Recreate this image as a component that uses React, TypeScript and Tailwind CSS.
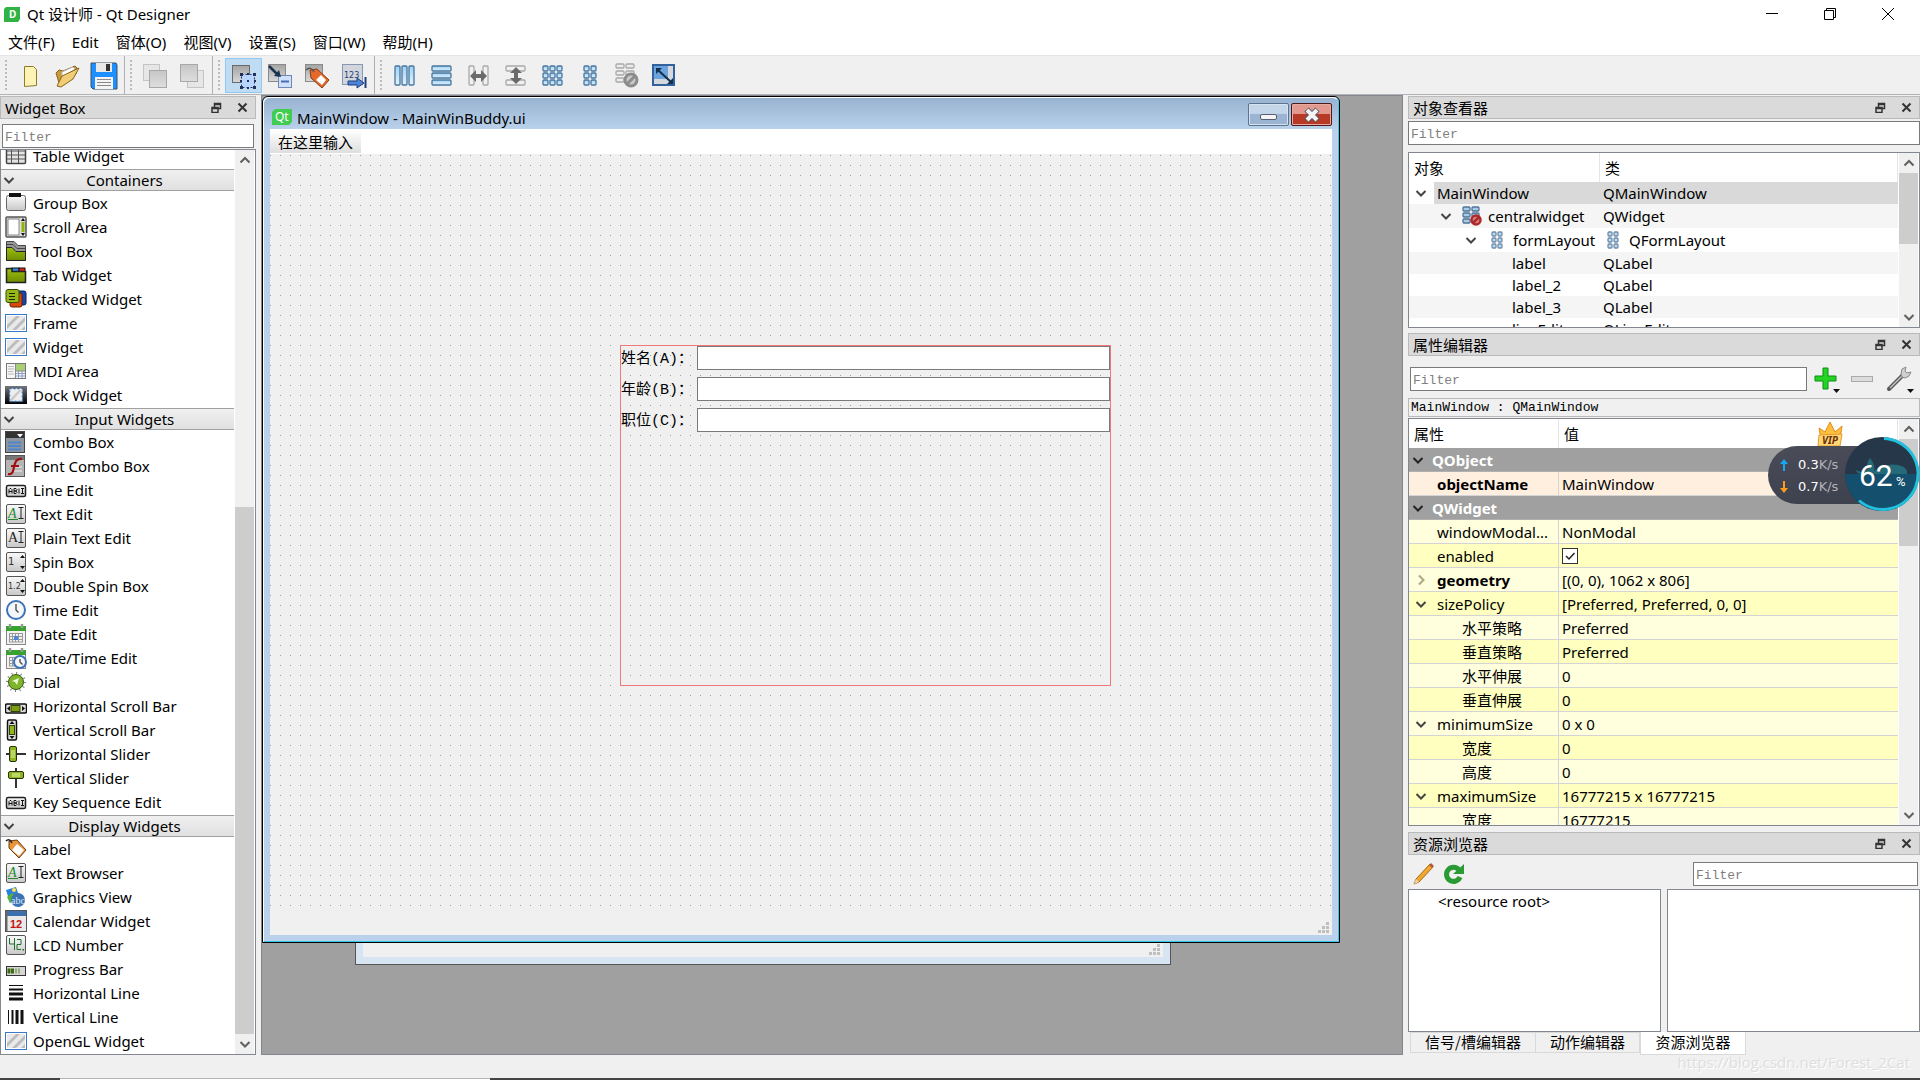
import { Fragment, type ReactNode } from "react";

type IconProps = { children: ReactNode };

function Glyph({ children }: IconProps) {
  return (
    <svg viewBox="0 0 22 22" className="size-[22px] shrink-0" aria-hidden="true">
      {children}
    </svg>
  );
}

function ToolGlyph({ children }: IconProps) {
  return (
    <svg viewBox="0 0 28 28" className="size-7 shrink-0" aria-hidden="true">
      {children}
    </svg>
  );
}

/* ---------- widget box icons ---------- */

const plate = <rect x="1.5" y="1.5" width="19" height="19" rx="1.5" fill="url(#plate)" stroke="#555" />;

const hatch = (
  <>
    <rect x="0.5" y="2.5" width="21" height="17" fill="#fff" stroke="#3a78c8" />
    <rect x="2" y="4" width="18" height="14" fill="#e9e9e9" />
    <path d="M2 13 11 4h4L2 17zM7 18 20 5v4l-9 9zM16 18l4-4v4z" fill="#bcbcbc" />
  </>
);

const abi = (
  <>
    <rect x="1.5" y="6.5" width="19" height="11" rx="1.5" fill="url(#plate)" stroke="#222" strokeWidth="1.500" />
    <path
      d="M4 14.500v-4l1-1h1l1 1v4M4 12.500h3M9 14.500v-5h2l1 1-1 1.500H9h2l1 1.500-1 1H9M14 9.500v5M16 9.500h3M17.500 9.500v5M16 14.500h3"
      fill="none"
      stroke="#111"
    />
  </>
);

const textGlyph = (color: string, slanted: boolean) => (
  <>
    {plate}
    <text
      x="3"
      y="15"
      fontSize="14"
      fontFamily="Liberation Serif"
      fontStyle={slanted ? "italic" : "normal"}
      fill={color}
    >
      A
    </text>
    {slanted && <path d="M3 16.500h10" stroke={color} />}
    <path d="M13.500 4.500h5M16 4.500v11M13.500 15.500h5" stroke="#222" fill="none" />
  </>
);

const spin = (value: string, size: number) => (
  <>
    {plate}
    <text x="3" y="14" fontSize={size} fontFamily="DejaVu Sans" fill="#333">
      {value}
    </text>
    <path d="m15 7 2.500-3L20 7zM15 15l2.500 3 2.500-3z" fill="#111" />
  </>
);

const clock = (cx: number, cy: number, r: number) => (
  <>
    <circle cx={cx} cy={cy} r={r} fill="#f4f6fa" stroke="#3d74b8" strokeWidth="2" />
    <path d={`M${cx} ${cy - r + 3}V${cy}l2.500 2.500`} fill="none" stroke="#444" strokeWidth="1.300" />
  </>
);

const calendar = (
  <>
    <rect x="1.500" y="4.500" width="19" height="17" fill="#f2f2f2" stroke="#888" />
    <rect x="1" y="3" width="20" height="5" fill="#39a22f" />
    <path d="M5 1v4M17 1v4" stroke="#999" strokeWidth="2.500" />
    <path d="M4 10.500h14M4 13.500h14M4 16.500h14M4 19h14M4.500 10v9M7.500 10v9M10.500 10v9M13.500 10v9M17.500 10v9" stroke="#999" />
  </>
);

const sliderKnob = (
  <>
    <path d="M1 11h20" stroke="#333" strokeWidth="2" />
    <rect x="4.500" y="3.500" width="7" height="15" rx="1.500" fill="#8fb61c" stroke="#26320a" />
    <path d="M7 7v8M9 7v8" stroke="#e8f4b8" />
  </>
);

const ICONS: Record<string, ReactNode> = {
  "Table Widget": (
    <>
      <rect x="1.500" y="1.500" width="19" height="17" rx="1" fill="#e4e4e4" stroke="#444" strokeWidth="1.500" />
      <path d="M2 6h18M2 10h18M2 14h18M6.500 2v16M13.500 2v16" stroke="#555" />
    </>
  ),
  "Group Box": (
    <>
      <rect x="1.500" y="3.500" width="19" height="15" rx="2" fill="url(#plate)" stroke="#666" />
      <rect x="4" y="1" width="12" height="4" fill="#111" />
    </>
  ),
  "Scroll Area": (
    <>
      <rect x="1" y="1" width="20" height="20" rx="1" fill="#ddd" stroke="#555" strokeWidth="1.500" />
      <rect x="3" y="3" width="11" height="16" fill="#fff" stroke="#888" />
      <rect x="16.500" y="6" width="3" height="10" fill="#8db600" />
      <path d="m16 5 2-3 2 3zM16 17l2 3 2-3z" fill="#111" />
    </>
  ),
  "Tool Box": (
    <>
      <path d="M1.500 8V1.500H9l4 4h7.500V20.500h-19z" fill="#999" stroke="#444" />
      <path d="M1.500 4.500H8l4 4h8.500" fill="none" stroke="#444" />
      <path d="M1.500 7.500H7l4 4h9.500v9h-19z" fill="url(#olive)" stroke="#222" />
    </>
  ),
  "Tab Widget": (
    <>
      <rect x="7" y="4" width="7" height="4" fill="#2f8fe0" stroke="#111" />
      <rect x="14" y="4" width="6" height="4" fill="#d22" stroke="#111" />
      <path d="M1.500 4.500H7v3h13.500v11h-19z" fill="url(#olive)" stroke="#222" strokeWidth="1.500" />
    </>
  ),
  "Stacked Widget": (
    <>
      <rect x="10" y="3" width="11" height="14" rx="2" fill="#1747a8" stroke="#0b245c" />
      <rect x="5" y="5" width="12" height="14" rx="2" fill="#d9480f" stroke="#6b1f00" />
      <rect x="1" y="1.500" width="13" height="13" rx="2" fill="#96b91a" stroke="#3b4d00" />
      <path d="M4 5.500h6M4 8.500h6M4 11.500h6" stroke="#1c2500" />
    </>
  ),
  Frame: hatch,
  Widget: hatch,
  "MDI Area": (
    <>
      <rect x="1.500" y="3.500" width="19" height="15" fill="#f4f4f4" stroke="#777" />
      <rect x="11" y="4" width="9" height="7" fill="#a9cf76" />
      <path d="M3 6.500h6M3 9h6M3 11.500h5M3 14h6" stroke="#bbb" />
      <path d="M11 13.500h9M11 16h9M13.500 11v7M17 11v7" stroke="#8aa0c8" />
      <path d="M10.500 4v14M11 11h9" stroke="#888" />
    </>
  ),
  "Dock Widget": (
    <>
      <rect y="2" width="22" height="18" fill="url(#dark)" />
      <rect x="4.500" y="4.500" width="13" height="13" fill="#eee" stroke="#2b6bb8" strokeDasharray="2 2" strokeWidth="1.500" />
      <path d="m6 14 8-8h3l-9 10H6z" fill="#ccc" />
    </>
  ),
  "Combo Box": (
    <>
      <rect x="0.500" y="0.500" width="19" height="21" fill="#8f959c" stroke="#444" />
      <rect x="1" y="1" width="18" height="6" fill="#333" />
      <path d="M12 3h6l-3 3.500z" fill="#fff" />
      <path d="M3 11.500h13M3 15h13M3 18.500h13" stroke="#4f86cc" strokeWidth="2" />
    </>
  ),
  "Font Combo Box": (
    <>
      <rect x="0.500" y="0.500" width="19" height="21" fill="#b4b4b4" stroke="#555" />
      <path d="M1 3h18" stroke="#777" strokeWidth="4" />
      <path d="M8 12h9M7 16h10" stroke="#d0d0d0" strokeWidth="2" />
      <path d="M3 19c5 1 5-3 6-7s2-9 8-8M6 11h8" fill="none" stroke="#a01010" strokeWidth="2.200" />
    </>
  ),
  "Line Edit": abi,
  "Text Edit": textGlyph("#1d8a2a", true),
  "Plain Text Edit": textGlyph("#222", false),
  "Spin Box": spin("1", 10),
  "Double Spin Box": spin("1.2", 8),
  "Time Edit": clock(11, 11, 9),
  "Date Edit": (
    <>
      {calendar}
      <rect x="9" y="13" width="4" height="4" fill="#4a86d8" />
    </>
  ),
  "Date/Time Edit": (
    <>
      {calendar}
      {clock(15, 15, 6)}
    </>
  ),
  Dial: (
    <>
      <circle cx="11" cy="11" r="9" fill="none" stroke="#777" strokeWidth="2" strokeDasharray="1 3.700" />
      <circle cx="11" cy="11" r="7.500" fill="#7fb52a" stroke="#3c5a10" />
      <path d="m7 10 7-3-2 7-2-3z" fill="#eef7d8" />
    </>
  ),
  "Horizontal Scroll Bar": (
    <>
      <rect x="0.500" y="9" width="21" height="9" rx="1.500" fill="#ddd" stroke="#111" strokeWidth="1.500" />
      <rect x="6" y="10.500" width="9" height="6" fill="#7c9c14" stroke="#334400" />
      <path d="m5 11-3 2.500L5 16zM17 11l3 2.500L17 16z" fill="#111" />
    </>
  ),
  "Vertical Scroll Bar": (
    <>
      <rect x="2.500" y="1" width="9" height="20" rx="1.500" fill="#ddd" stroke="#111" strokeWidth="1.500" />
      <rect x="4.500" y="6.500" width="5" height="9" fill="#8fb61c" stroke="#334400" />
      <path d="M4.500 5 7 2l2.500 3zM4.500 17 7 20l2.500-3z" fill="#111" />
    </>
  ),
  "Horizontal Slider": sliderKnob,
  "Vertical Slider": <g transform="matrix(0 1 1 0 0 0)">{sliderKnob}</g>,
  "Key Sequence Edit": abi,
  Label: (
    <>
      <path d="m4 3 8-1 9 10-7 8L4 10z" fill="#e8943c" stroke="#6b3c10" />
      <path d="m12 6 7 6-5 6-7-6z" fill="#fff" />
      <path d="M1 3c3-3 5 0 6 2" fill="none" stroke="#222" strokeWidth="1.500" />
    </>
  ),
  "Text Browser": textGlyph("#1d8a2a", true),
  "Graphics View": (
    <>
      <path d="m1 4 10-3 3 9-9 7z" fill="#2c7fe0" />
      <path d="m2 11 5-4 5 4-7 6z" fill="#58b430" />
      <circle cx="9" cy="4" r="2" fill="#ffe14a" />
      <circle cx="13" cy="14" r="7" fill="#3a72b4" />
      <text x="6" y="18" fontSize="10" fontFamily="Liberation Serif" fill="#d7e4f4">
        abc
      </text>
    </>
  ),
  "Calendar Widget": (
    <>
      <rect x="0.500" y="0.500" width="21" height="21" fill="#e9e9e9" stroke="#555" />
      <rect x="2" y="1" width="19" height="5" fill="#3c6fae" />
      <path d="M1.500 1v20" stroke="#666" strokeWidth="2" />
      <text x="5" y="18" fontSize="11" fontWeight="700" fontFamily="Liberation Sans" fill="#c41414">
        12
      </text>
    </>
  ),
  "LCD Number": (
    <>
      {plate}
      <path d="M4.500 4v6h5M9.500 4v12M12 5.500h4v5h-4v5h4" fill="none" stroke="#1f6f2c" />
      <rect x="17.500" y="15" width="1.500" height="1.500" fill="#1f6f2c" />
    </>
  ),
  "Progress Bar": (
    <>
      <rect x="1.500" y="8.500" width="19" height="9" fill="#d6d6d6" stroke="#333" />
      <path d="M4 10.500v5M7.500 10.500v5" stroke="#3f6b12" strokeWidth="3" />
      <path d="M11 10.500v5M14 10.500v5" stroke="#90ad78" strokeWidth="2" />
    </>
  ),
  "Horizontal Line": (
    <>
      <path d="M4 3.500h14" stroke="#111" strokeWidth="1" />
      <path d="M4 7.500h14" stroke="#111" strokeWidth="2" />
      <path d="M4 12h14M4 17h14" stroke="#111" strokeWidth="3" />
    </>
  ),
  "Vertical Line": (
    <>
      <path d="M3.500 4v14" stroke="#111" strokeWidth="1" />
      <path d="M7.500 4v14" stroke="#111" strokeWidth="2" />
      <path d="M12 4v14M17 4v14" stroke="#111" strokeWidth="3" />
    </>
  ),
  "OpenGL Widget": hatch,
};

const SECTIONS = [
  {
    title: "Containers",
    items: [
      "Group Box",
      "Scroll Area",
      "Tool Box",
      "Tab Widget",
      "Stacked Widget",
      "Frame",
      "Widget",
      "MDI Area",
      "Dock Widget",
    ],
  },
  {
    title: "Input Widgets",
    items: [
      "Combo Box",
      "Font Combo Box",
      "Line Edit",
      "Text Edit",
      "Plain Text Edit",
      "Spin Box",
      "Double Spin Box",
      "Time Edit",
      "Date Edit",
      "Date/Time Edit",
      "Dial",
      "Horizontal Scroll Bar",
      "Vertical Scroll Bar",
      "Horizontal Slider",
      "Vertical Slider",
      "Key Sequence Edit",
    ],
  },
  {
    title: "Display Widgets",
    items: [
      "Label",
      "Text Browser",
      "Graphics View",
      "Calendar Widget",
      "LCD Number",
      "Progress Bar",
      "Horizontal Line",
      "Vertical Line",
      "OpenGL Widget",
    ],
  },
];

/* ---------- toolbar ---------- */

const cells = (xs: number[], ys: number[], w: number, h: number, fill: string, stroke: string) =>
  xs.flatMap((x) =>
    ys.map((y) => (
      <rect key={`${x}-${y}`} x={x} y={y} width={w} height={h} rx="1" fill={fill} stroke={stroke} strokeWidth="1.300" />
    )),
  );

const greySquare = (x: number, y: number) => (
  <rect x={x} y={y} width="17" height="17" fill="url(#soft)" stroke="#a8a8a8" />
);

const TOOL_GROUPS: { label: string; selected?: boolean; icon: ReactNode }[][] = [
  [
    {
      label: "New",
      icon: <path d="M8.500 4.500h9l3 3v16l-12 1z" fill="#fdf3b4" stroke="#8f7a2c" />,
    },
    {
      label: "Open",
      icon: (
        <>
          <path d="m3 11 3-3 4 1 12-5 2 2-1 6L7 24z" fill="#c99a3a" stroke="#8a6316" />
          <path d="m9 10 11-5 2 2-13 9z" fill="#fff" stroke="#bbb" />
          <path d="M4 24 9 14l17-8-6 11L8 25z" fill="#f0cd76" stroke="#8a6316" />
        </>
      ),
    },
    {
      label: "Save",
      icon: (
        <>
          <path d="M1 1h25l1 2v24H3l-2-2z" fill="#1e8fff" stroke="#3c5266" />
          <rect x="6" y="1" width="16" height="9" fill="#e8e8e8" />
          <rect x="16" y="2" width="4" height="7" fill="#333" />
          <rect x="5" y="15" width="18" height="12" fill="#f4f4f4" />
          <path d="M7 17.500h14M7 20.500h14M7 23.500h14" stroke="#888" />
        </>
      ),
    },
  ],
  [
    {
      label: "Send to back",
      icon: (
        <>
          <rect x="2.500" y="2.500" width="16" height="16" fill="#e6e6e6" stroke="#c4c4c4" />
          {greySquare(8.5, 8.5)}
        </>
      ),
    },
    {
      label: "Bring to front",
      icon: (
        <>
          <rect x="9.500" y="8.500" width="16" height="17" fill="#e6e6e6" stroke="#c4c4c4" />
          {greySquare(2.5, 2.5)}
        </>
      ),
    },
  ],
  [
    {
      label: "Edit Widgets",
      selected: true,
      icon: (
        <>
          <rect x="3.500" y="3.500" width="17" height="17" fill="url(#grey)" stroke="#6a6a6a" />
          <rect x="12.500" y="12.500" width="13" height="13" fill="#b9d4ff" stroke="#24386a" strokeDasharray="2 2" />
          <path
            d="M11 11h3v3h-3zM18 11h2v2h-2zM24 11h3v3h-3zM11 18h2v2h-2zM25 18h2v2h-2zM11 24h3v3h-3zM18 25h2v2h-2zM24 24h3v3h-3zM18 18h2v2h-2z"
            fill="#1f2f5c"
          />
        </>
      ),
    },
    {
      label: "Edit Signals/Slots",
      icon: (
        <>
          <rect x="2.500" y="2.500" width="17" height="17" fill="url(#grey)" stroke="#8a8a8a" />
          <rect x="12.500" y="13.500" width="13" height="12" fill="#cfe0fa" stroke="#6f87b4" />
          <path d="M15 19.500h8" stroke="#4b6cae" strokeWidth="2" />
          <path d="m3 4 9 9" stroke="#1c3350" strokeWidth="2.500" />
          <path d="m15 15-7-1 5-6z" fill="#1c3350" />
        </>
      ),
    },
    {
      label: "Edit Buddies",
      icon: (
        <>
          <rect x="2.500" y="2.500" width="17" height="17" fill="url(#grey)" stroke="#8a8a8a" />
          <path d="m7 8 7-1 12 11-7 8L8 16z" fill="#e26a2c" stroke="#8a3a10" />
          <path d="m18 13 5 5-4 5-6-5z" fill="#fff" />
          <path d="M3 8c3-3 6-2 8 2" fill="none" stroke="#555" strokeWidth="1.500" />
        </>
      ),
    },
    {
      label: "Edit Tab Order",
      icon: (
        <>
          <rect x="2.500" y="2.500" width="20" height="20" fill="#d2d6dc" stroke="#8796b4" />
          <text x="4" y="16" fontSize="8" fontFamily="DejaVu Sans" fill="#1f3f74">
            123
          </text>
          <path d="M8 19h9v-3l7 5-7 5v-3H8z" fill="#4d84d8" stroke="#1c3f80" />
          <path d="M25.500 15v11" stroke="#1c3f80" strokeWidth="2" />
        </>
      ),
    },
  ],
  [
    { label: "Lay Out Horizontally", icon: cells([4, 11, 18], [4], 5, 19, "url(#sky)", "#47759f") },
    { label: "Lay Out Vertically", icon: cells([4], [4, 11, 18], 19, 5, "url(#sky)", "#47759f") },
    {
      label: "Lay Out Horizontally in Splitter",
      icon: (
        <>
          {cells([4, 18], [4], 5, 19, "#f0f0f0", "#a8a8a8")}
          <path d="m5 14 6-6v4h5V8l6 6-6 6v-4h-5v4z" fill="#6a6a6a" />
        </>
      ),
    },
    {
      label: "Lay Out Vertically in Splitter",
      icon: (
        <>
          {cells([4], [4, 18], 19, 5, "#f0f0f0", "#a8a8a8")}
          <path d="m14 5 6 6h-4v5h4l-6 6-6-6h4v-5H8z" fill="#6a6a6a" />
        </>
      ),
    },
    { label: "Lay Out in a Grid", icon: cells([4, 11, 18], [4, 11, 18], 5, 5, "url(#sky)", "#47759f") },
    { label: "Lay Out in a Form Layout", icon: cells([8, 15], [4, 11, 18], 5, 5, "url(#sky)", "#47759f") },
    {
      label: "Break Layout",
      icon: (
        <>
          {cells([3, 13], [2, 9, 16], 8, 4, "#ececec", "#a8a8a8")}
          <circle cx="18" cy="18" r="6" fill="#c8c8c8" stroke="#8c8c8c" strokeWidth="3" />
          <path d="m14 22 8-8" stroke="#8c8c8c" strokeWidth="3" />
        </>
      ),
    },
    {
      label: "Adjust Size",
      icon: (
        <>
          <rect x="3" y="3" width="21" height="20" fill="#d5d9de" stroke="#33619c" strokeWidth="2" />
          <rect x="4" y="4" width="14" height="13" fill="#6ba3dc" />
          <path d="m8 8 13 12" stroke="#12304f" strokeWidth="2" />
          <path d="M6 6h6l-6 6zM23 22h-6l6-6z" fill="#12304f" />
        </>
      ),
    },
  ],
];

function Toolbar() {
  return (
    <div className="flex h-10 shrink-0 border-y border-t-[#e4e4e4] border-b-[#b4b4b4] bg-[#f0f0f0]">
      {TOOL_GROUPS.map((group, i) => (
        <div key={i} className="flex border-r border-[#b0b0b0] pr-px last:border-r-0">
          <div className="flex w-3 justify-center py-1">
            <div className="w-0.5 bg-[repeating-linear-gradient(#bcbcbc_0_2px,transparent_2px_4px)]" />
          </div>
          {group.map((tool) => (
            <button
              key={tool.label}
              aria-label={tool.label}
              className={
                tool.selected
                  ? "mt-0.5 mb-px flex w-[37px] items-center justify-center border border-[#90c8f6] bg-[#c0dcf3] pr-px"
                  : "mt-0.5 mb-px flex w-[37px] items-center justify-center pr-px"
              }
            >
              <ToolGlyph>{tool.icon}</ToolGlyph>
            </button>
          ))}
        </div>
      ))}
    </div>
  );
}

/* ---------- shared pieces ---------- */

function Chevron({ dir = "down", color = "#444" }: { dir?: "down" | "up" | "right"; color?: string }) {
  const d = { down: "m1.500 4 4.500 4.500L10.500 4", up: "M1.500 8.500 6 4l4.500 4.500", right: "m4 1.500 4.500 4.500L4 10.500" }[dir];
  return (
    <svg viewBox="0 0 12 12" className="size-3 shrink-0" aria-hidden="true">
      <path d={d} fill="none" stroke={color} strokeWidth="2" />
    </svg>
  );
}

function DockTitle({ title }: { title: string }) {
  return (
    <div className="flex h-[23px] shrink-0 items-center border border-[#bababa] bg-[#dadada] pr-[7px] pl-1">
      <h2 className="flex-1 leading-5">{title}</h2>
      <button aria-label="Float" className="mr-[15px]">
        <svg viewBox="0 0 11 11" className="size-[11px]">
          <path d="M3.500 5V1.500h6v5H7M3 2.500h7M1 5.500h6v5H1zM1 6.500h6" fill="none" stroke="#333" strokeWidth="1.500" />
        </svg>
      </button>
      <button aria-label="Close">
        <svg viewBox="0 0 11 11" className="size-[11px]">
          <path d="m1.500 1.500 8 8M9.500 1.500l-8 8" stroke="#333" strokeWidth="2" />
        </svg>
      </button>
    </div>
  );
}

function Filter({ label, className }: { label: string; className: string }) {
  return (
    <input
      type="text"
      aria-label={label}
      placeholder="Filter"
      className={`h-6 border border-[#7a7a7a] bg-white px-0.5 pt-0.5 font-['Liberation_Mono',monospace] text-[13px] outline-none placeholder:text-[#808080] ${className}`}
    />
  );
}

function ScrollBar({ before, thumb }: { before: string; thumb: string }) {
  return (
    <div className="flex w-[21px] shrink-0 flex-col border-x border-x-white bg-[#f0f0f0]">
      <div className="flex h-5 items-center justify-center">
        <Chevron dir="up" color="#606060" />
      </div>
      <div className={before} />
      <div className={`bg-[#cdcdcd] ${thumb}`} />
      <div className="mt-auto flex h-5 items-center justify-center">
        <Chevron color="#606060" />
      </div>
    </div>
  );
}

function WidgetRow({ name }: { name: string }) {
  return (
    <li className="flex h-6 shrink-0 items-center gap-1.5 pb-0.5 pl-1">
      <Glyph>{ICONS[name]}</Glyph>
      <span className="leading-5">{name}</span>
    </li>
  );
}

function WidgetBox() {
  return (
    <aside className="flex w-64 shrink-0 flex-col pt-px">
      <DockTitle title="Widget Box" />
      <Filter label="Filter widgets" className="mx-0.5 mt-[5px]" />
      <div className="mt-px flex min-h-0 flex-1 border border-[#828790] bg-white">
        <ul className="flex flex-1 flex-col justify-end overflow-hidden">
          <WidgetRow name="Table Widget" />
          {SECTIONS.map((section) => (
            <Fragment key={section.title}>
              <li className="mb-px flex h-[22px] shrink-0 items-center border-y border-[#a0a0a0] bg-linear-to-b from-[#f0f0f0] to-[#e0e0e0] pl-0.5">
                <Chevron />
                <span className="flex-1 text-center leading-5">{section.title}</span>
              </li>
              {section.items.map((name) => (
                <WidgetRow key={name} name={name} />
              ))}
            </Fragment>
          ))}
        </ul>
        <ScrollBar before="flex-[337]" thumb="flex-[526]" />
      </div>
    </aside>
  );
}

/* ---------- form area ---------- */

function Grip() {
  return (
    <svg viewBox="0 0 11 11" className="size-[11px]" aria-hidden="true">
      <path d="M8 0h3v3H8zM4 4h3v3H4zM8 4h3v3H8zM0 8h3v3H0zM4 8h3v3H4zM8 8h3v3H8z" fill="#bfbfbf" />
    </svg>
  );
}

const FIELDS = ["姓名(A)：", "年龄(B)：", "职位(C)："];

function FormWindow() {
  return (
    <section className="absolute top-0 left-0 flex h-[847px] w-[1078px] flex-col rounded-t-md border border-black bg-[#b9d1ea]">
      <div className="flex min-h-0 flex-1 flex-col rounded-t-md border border-t-white border-r-[#35c8ea] border-b-[#35c8ea] border-l-white px-1.5 pb-1.5">
        <header className="-mx-1.5 flex h-[31px] shrink-0 items-start rounded-t-md bg-linear-to-b from-[#98b3d1] to-[#b9d1ea] pt-[5px] pr-1.5 pl-2">
          <svg viewBox="0 0 20 16" className="mt-1.5 h-4 w-5" aria-hidden="true">
            <path d="M3 0h17v13l-3 3H0V3z" fill="#41cd52" />
            <text x="3" y="12" fontSize="12" fontFamily="Noto Sans" fill="#fff">
              Qt
            </text>
          </svg>
          <h1 className="flex-1 pt-[5px] pl-[5px] leading-5">MainWindow - MainWinBuddy.ui</h1>
          <button
            aria-label="Minimize form"
            className="mr-0.5 flex h-[23px] w-[41px] items-center justify-center rounded-xs border border-[#5c7390] bg-linear-to-b from-[#c3d5e9] from-45% to-[#9ab4d2] to-50% shadow-[inset_0_0_0_1px_#d6e3f1]"
          >
            <span className="mt-1 h-1.5 w-[17px] rounded-xs border border-[#5a5f70] bg-[#f4f4f4]" />
          </button>
          <button
            aria-label="Close form"
            className="flex h-[23px] w-[41px] items-center justify-center rounded-xs border border-[#4a1a20] bg-linear-to-b from-[#e29a8e] from-45% to-[#b83a26] to-50% shadow-[inset_0_0_0_1px_#e8aaa0]"
          >
            <svg viewBox="0 0 18 16" className="h-4 w-[18px]">
              <path d="m3.500 2.500 11 11M14.500 2.500l-11 11" stroke="#54586a" strokeWidth="6" />
              <path d="m4 3 10 10M14 3 4 13" stroke="#f4f4f4" strokeWidth="4" />
            </svg>
          </button>
        </header>
        <div className="flex h-[25px] shrink-0 bg-white">
          <button className="my-px bg-linear-to-b from-white to-[#dedede] px-2 leading-5">在这里输入</button>
        </div>
        <div className="relative h-[761px] bg-[#f0f0f0] bg-[conic-gradient(at_1px_1px,transparent_270deg,#9c9c9c_270deg)] bg-[length:10px_10px] [background-position:0_1px]">
          <form className="absolute top-[191px] left-[350px] flex h-[341px] w-[491px] flex-col gap-[7px] border border-[#f07878]">
            {FIELDS.map((label) => (
              <label key={label} className="flex h-6 items-center">
                <span className="w-[76px] pt-1 font-['Liberation_Mono','Noto_Sans_CJK_SC',monospace] leading-5">
                  {label}
                </span>
                <input type="text" className="h-6 flex-1 border border-[#7a7a7a] bg-white outline-none" />
              </label>
            ))}
          </form>
        </div>
        <footer className="flex flex-1 items-end justify-end bg-[#f0f0f0] pr-[3px] pb-0.5">
          <Grip />
        </footer>
      </div>
    </section>
  );
}

function MdiArea() {
  return (
    <main className="relative mr-[5px] ml-[5px] min-w-0 flex-1 overflow-hidden border border-[#828790] bg-[#a0a0a0]">
      <div className="absolute top-[600px] left-[93px] h-[269px] w-[816px] border border-[#555] bg-[#d7e4f2] px-[7px] pb-[7px]">
        <div className="flex h-full items-end justify-end bg-[#f0f0f0] pr-[3px] pb-0.5">
          <Grip />
        </div>
      </div>
      <FormWindow />
    </main>
  );
}

/* ---------- right docks ---------- */

const formIcon = (
  <svg viewBox="0 0 20 20" className="size-5 shrink-0" aria-hidden="true">
    {cells([5, 11], [2, 8, 14], 4, 4, "#bcd9ee", "#6f8cab")}
  </svg>
);

const brokenIcon = (
  <svg viewBox="0 0 20 20" className="size-5 shrink-0" aria-hidden="true">
    {cells([1, 10], [1, 7, 13], 7, 4, "#a8cbe8", "#4f7396")}
    <circle cx="14" cy="14" r="4.500" fill="#c98a8a" stroke="#b02828" strokeWidth="2.500" />
    <path d="m11 17 6-6" stroke="#b02828" strokeWidth="2.500" />
  </svg>
);

const OBJECTS = [
  { name: "MainWindow", type: "QMainWindow", indent: "w-0", open: true, row: "h-[22px] bg-white", selected: true },
  { name: "centralwidget", type: "QWidget", indent: "w-[25px]", open: true, row: "h-6 bg-[#f5f5f5]", icon: brokenIcon },
  { name: "formLayout", type: "QFormLayout", indent: "w-[50px]", open: true, row: "h-6 bg-white", icon: formIcon, typeIcon: formIcon },
  { name: "label", type: "QLabel", indent: "w-[75px]", row: "h-[22px] bg-[#f5f5f5]" },
  { name: "label_2", type: "QLabel", indent: "w-[75px]", row: "h-[22px] bg-white" },
  { name: "label_3", type: "QLabel", indent: "w-[75px]", row: "h-[22px] bg-[#f5f5f5]" },
  { name: "lineEdit", type: "QLineEdit", indent: "w-[75px]", row: "h-[22px] bg-white" },
];

function ObjectInspector() {
  return (
    <>
      <DockTitle title="对象查看器" />
      <Filter label="Filter objects" className="mt-0.5" />
      <div className="mt-[7px] flex h-[176px] shrink-0 border border-[#828790] bg-white">
        <div className="min-w-0 flex-1 overflow-hidden">
          <table className="w-full table-fixed border-separate border-spacing-0">
            <thead>
              <tr className="h-[29px] text-left">
                <th className="w-[191px] border-r border-[#e5e5e5] p-0 pl-[5px] leading-5 font-normal">对象</th>
                <th className="border-r border-[#e5e5e5] p-0 pl-[5px] leading-5 font-normal">类</th>
              </tr>
            </thead>
            <tbody>
              {OBJECTS.map((o) => (
                <tr key={o.name} className={o.row}>
                  <td className="h-[inherit] p-0">
                    <div className="flex h-full">
                      <span className={o.indent} />
                      <span className="flex w-[25px] shrink-0 items-center justify-center pr-0.5">
                        {o.open && <Chevron />}
                      </span>
                      <span
                        className={
                          o.selected
                            ? "flex flex-1 items-center gap-1.5 bg-[#d9d9d9] pl-[3px] leading-[22px]"
                            : "flex flex-1 items-center gap-1.5 pl-[3px] leading-[22px]"
                        }
                      >
                        {o.icon}
                        {o.name}
                      </span>
                    </div>
                  </td>
                  <td className={o.selected ? "bg-[#d9d9d9] p-0 pl-[3px]" : "p-0 pl-[3px]"}>
                    <span className="flex items-center gap-1.5 leading-[22px]">
                      {o.typeIcon}
                      {o.type}
                    </span>
                  </td>
                </tr>
              ))}
            </tbody>
          </table>
        </div>
        <ScrollBar before="h-0" thumb="h-[71px]" />
      </div>
    </>
  );
}

type Property = {
  name: string;
  value?: ReactNode;
  level?: "group" | "child";
  state?: "open" | "closed";
  bold?: boolean;
  bg: string;
};

const LIGHT = "bg-[#ffffdd]";
const DEEP = "bg-[#ffffbf]";

const PROPERTIES: Property[] = [
  { name: "QObject", level: "group", state: "open", bg: "bg-[#a0a0a0]" },
  { name: "objectName", value: "MainWindow", bold: true, bg: "bg-[#ffefdf]" },
  { name: "QWidget", level: "group", state: "open", bg: "bg-[#a0a0a0]" },
  { name: "windowModal...", value: "NonModal", bg: LIGHT },
  {
    name: "enabled",
    value: (
      <span className="relative flex size-4">
        <input
          type="checkbox"
          defaultChecked
          aria-label="enabled"
          className="size-4 appearance-none border border-[#333] bg-white"
        />
        <svg viewBox="0 0 16 16" className="pointer-events-none absolute inset-0 size-4">
          <path d="m4 8 3 3 5.500-6" fill="none" stroke="#222" strokeWidth="1.500" />
        </svg>
      </span>
    ),
    bg: DEEP,
  },
  { name: "geometry", value: "[(0, 0), 1062 x 806]", state: "closed", bold: true, bg: LIGHT },
  { name: "sizePolicy", value: "[Preferred, Preferred, 0, 0]", state: "open", bg: DEEP },
  { name: "水平策略", value: "Preferred", level: "child", bg: LIGHT },
  { name: "垂直策略", value: "Preferred", level: "child", bg: DEEP },
  { name: "水平伸展", value: "0", level: "child", bg: LIGHT },
  { name: "垂直伸展", value: "0", level: "child", bg: DEEP },
  { name: "minimumSize", value: "0 x 0", state: "open", bg: LIGHT },
  { name: "宽度", value: "0", level: "child", bg: DEEP },
  { name: "高度", value: "0", level: "child", bg: LIGHT },
  { name: "maximumSize", value: "16777215 x 16777215", state: "open", bg: DEEP },
  { name: "宽度", value: "16777215", level: "child", bg: LIGHT },
];

function PropertyRow({ prop }: { prop: Property }) {
  if (prop.level === "group") {
    return (
      <tr className={prop.bg}>
        <td colSpan={2} className="h-6 border-b border-[#b0b0b0] p-0 text-white">
          <div className="flex items-center gap-2 pl-[3px] leading-5 font-bold">
            <Chevron color="#222" />
            {prop.name}
          </div>
        </td>
      </tr>
    );
  }
  return (
    <tr className={prop.bg}>
      <td className="h-6 border-r border-b border-[#d4d4d4] p-0">
        <div className="flex items-center">
          <span className="flex w-[25px] shrink-0 items-center justify-center pr-0.5">
            {prop.state && (
              <Chevron
                dir={prop.state === "open" ? "down" : "right"}
                color={prop.state === "open" ? "#444" : "#a8a888"}
              />
            )}
          </span>
          <span
            className={
              prop.level === "child"
                ? "pl-7 leading-5"
                : prop.bold
                  ? "pl-[3px] leading-5 font-bold"
                  : "pl-[3px] leading-5"
            }
          >
            {prop.name}
          </span>
        </div>
      </td>
      <td className="border-b border-[#d4d4d4] p-0 pl-[3px] leading-5">{prop.value}</td>
    </tr>
  );
}

function PropertyEditor() {
  return (
    <>
      <div className="mt-[5px]">
        <DockTitle title="属性编辑器" />
      </div>
      <div className="mt-[11px] flex h-6 shrink-0 items-center pr-1.5 pl-0.5">
        <Filter label="Filter properties" className="min-w-0 flex-1" />
        <button aria-label="Add dynamic property" className="ml-1.5">
          <svg viewBox="0 0 28 28" className="size-7">
            <path d="M10 3h5v8h8v5h-8v8h-5v-8H2v-5h8z" fill="#25d325" stroke="#0b8f12" />
            <path d="M20 24h7l-3.500 4z" fill="#111" />
          </svg>
        </button>
        <button aria-label="Remove dynamic property" className="ml-2">
          <svg viewBox="0 0 28 28" className="size-7">
            <rect x="2.500" y="11.500" width="21" height="5" fill="#dcdcdc" stroke="#aaa" />
          </svg>
        </button>
        <button aria-label="Configure" className="ml-[9px]">
          <svg viewBox="0 0 28 28" className="size-7">
            <path d="M3 24 17 10" stroke="#5a5a5a" strokeWidth="4" strokeLinecap="round" />
            <path d="M4 23 17 10" stroke="#c4c4c4" strokeWidth="1.500" />
            <path d="m15 9 1-5 4-2-1 4 2 2 4-1-2 4-4 2-3-1z" fill="#d0d0d0" stroke="#888" />
            <path d="M21 24h7l-3.500 4z" fill="#111" />
          </svg>
        </button>
      </div>
      <p className="mt-[7px] h-[19px] shrink-0 border border-[#bababa] px-0.5 font-['Liberation_Mono',monospace] text-[13px] leading-[18px]">
        MainWindow : QMainWindow
      </p>
      <div className="mt-px flex h-[408px] shrink-0 border border-[#828790] bg-white">
        <div className="min-w-0 flex-1 overflow-hidden">
          <table className="w-full table-fixed border-separate border-spacing-0">
            <thead>
              <tr className="h-[29px] text-left">
                <th className="w-[150px] border-r border-[#e5e5e5] p-0 pl-[5px] leading-5 font-normal">属性</th>
                <th className="border-r border-[#e5e5e5] p-0 pl-[5px] leading-5 font-normal">值</th>
              </tr>
            </thead>
            <tbody>
              {PROPERTIES.map((prop, i) => (
                <PropertyRow key={i} prop={prop} />
              ))}
            </tbody>
          </table>
        </div>
        <ScrollBar before="h-0" thumb="h-[107px]" />
      </div>
    </>
  );
}

function ResourceBrowser() {
  return (
    <>
      <div className="mt-1.5">
        <DockTitle title="资源浏览器" />
      </div>
      <div className="flex h-[34px] shrink-0 items-center gap-1.5 pt-1 pr-0.5 pl-1">
        <button aria-label="Edit resources">
          <svg viewBox="0 0 24 24" className="size-6">
            <path d="m2 22 2-5L18 2l3 3L7 20z" fill="#f0a830" stroke="#a86a14" />
            <path d="m2 22 2-5 3 3z" fill="#e8d4a8" />
            <path d="m17 3 2-2 3 3-2 2z" fill="#b45a3c" />
          </svg>
        </button>
        <button aria-label="Reload">
          <svg viewBox="0 0 24 24" className="size-6">
            <path d="M18 15a7 7 0 1 1-1-7" fill="none" stroke="#2a9a34" strokeWidth="5" />
            <path d="M22 2v10H11z" fill="#2a9a34" />
          </svg>
        </button>
        <Filter label="Filter resources" className="ml-auto w-[225px]" />
      </div>
      <div className="grid min-h-0 flex-1 grid-cols-2 gap-1.5">
        <ul className="border border-[#828790] bg-white pt-px pl-[29px] leading-5">
          <li>&lt;resource root&gt;</li>
        </ul>
        <div className="border border-[#828790] bg-white" />
      </div>
      <div className="flex h-[23px] shrink-0 items-start pl-0.5 font-['Noto_Sans_CJK_SC',sans-serif]">
        <button className="h-[21px] w-[126px] border border-[#d9d9d9] pb-0.5 leading-4">信号/槽编辑器</button>
        <button className="h-[21px] w-[104px] border border-l-0 border-[#d9d9d9] pb-0.5 leading-4">动作编辑器</button>
        <button className="h-[23px] w-[106px] border border-t-0 border-[#d9d9d9] bg-white pb-0.5 leading-5">
          资源浏览器
        </button>
      </div>
    </>
  );
}

function NetMeter() {
  return (
    <div className="absolute top-[436px] right-0 h-[76px] w-[152px] text-white">
      <svg viewBox="0 0 28 28" className="absolute -top-4 left-12 size-7" aria-hidden="true">
        <path d="m3 8 6 4 5-10 5 10 7-6-2 13H5z" fill="#fbbf3c" stroke="#e08a1c" />
        <path d="m3 15 23-1-2 12H2z" fill="#ffd774" stroke="#e79a2c" />
        <text x="6" y="24" fontSize="10" fontWeight="700" fontStyle="italic" fontFamily="Noto Sans" fill="#6b2c08">
          VIP
        </text>
      </svg>
      <div className="absolute top-2.5 left-0 flex h-[58px] w-28 flex-col justify-center rounded-l-full bg-linear-to-b from-[#4a4c58] to-[#3e414e] pt-0.5 pl-3 font-['DejaVu_Sans',sans-serif] text-[13px]">
        <p className="flex items-center leading-[22px]">
          <svg viewBox="0 0 8 12" className="mr-2.5 h-3 w-2">
            <path d="M4 0 8 5H5v7H3V5H0z" fill="#17a8f5" />
          </svg>
          0.3<span className="text-[#b0b2ba]">K/s</span>
        </p>
        <p className="flex items-center leading-[22px]">
          <svg viewBox="0 0 8 12" className="mr-2.5 h-3 w-2">
            <path d="M4 12 0 7h3V0h2v7h3z" fill="#ff9a1a" />
          </svg>
          0.7<span className="text-[#b0b2ba]">K/s</span>
        </p>
      </div>
      <svg viewBox="0 0 76 76" className="absolute top-0 right-0 size-[76px]" aria-hidden="true">
        <circle cx="38" cy="38" r="37" fill="#27374a" />
        <path d="M12 34q6 4 12-1-2-6 2-11 6 8 4 13 10-8 24-6 10 2 9 9H20q-8 0-8-4z" fill="#256a78" />
        <path d="M1 38h74a37 37 0 0 1-74 0z" fill="#144f6d" />
        <path d="M40 2.500a35.500 35.500 0 1 1-25 62" fill="none" stroke="#22c0dc" strokeWidth="3" />
        <text x="15" y="50" fontSize="30" fontFamily="Roboto" fill="#fff">
          62
        </text>
        <text x="52" y="50" fontSize="13" fontFamily="Roboto" fill="#fff">
          %
        </text>
      </svg>
    </div>
  );
}

const MENUS = ["文件(F)", "Edit", "窗体(O)", "视图(V)", "设置(S)", "窗口(W)", "帮助(H)"];

const CAPTION_BUTTONS = [
  { label: "Minimize", d: "M1 6.500h12" },
  { label: "Restore", d: "M1.500 3.500h9v9h-9zM3.500 3.500v-2h9v9h-2" },
  { label: "Close", d: "m1 1 12 12M13 1 1 13" },
];

export default function App() {
  return (
    <div className="relative flex h-screen flex-col overflow-hidden bg-[#f0f0f0] font-['Noto_Sans','Noto_Sans_CJK_SC',sans-serif] text-[15px] text-black">
      <svg className="absolute size-0" aria-hidden="true">
        <defs>
          <linearGradient id="plate" x2="0" y2="1">
            <stop stopColor="#fafafa" />
            <stop offset="1" stopColor="#c8c8c8" />
          </linearGradient>
          <linearGradient id="olive" x2="0" y2="1">
            <stop stopColor="#9cbf10" />
            <stop offset="1" stopColor="#6f8c00" />
          </linearGradient>
          <linearGradient id="grey" x2="0" y2="1">
            <stop stopColor="#a4a4a4" />
            <stop offset="1" stopColor="#d8d8d8" />
          </linearGradient>
          <linearGradient id="soft" x2="0" y2="1">
            <stop stopColor="#c6c6c6" />
            <stop offset="1" stopColor="#dedede" />
          </linearGradient>
          <linearGradient id="sky" x2="0" y2="1">
            <stop stopColor="#9dd2f5" />
            <stop offset="1" stopColor="#e2f2fc" />
          </linearGradient>
          <linearGradient id="dark" x2="0" y2="1">
            <stop stopColor="#777" />
            <stop offset="1" stopColor="#000" />
          </linearGradient>
        </defs>
      </svg>

      <div className="flex h-[30px] shrink-0 items-center bg-white pr-[3px] pb-0.5 pl-1">
        <svg viewBox="0 0 16 15" className="h-[15px] w-4" aria-hidden="true">
          <path d="M2 0h14v12l-2 3H0V2z" fill="#2fb344" />
          <text x="5" y="11" fontSize="10" fontWeight="700" fontFamily="Noto Sans" fill="#fff">
            D
          </text>
        </svg>
        <span className="flex-1 pl-[7px] leading-5">Qt 设计师 - Qt Designer</span>
        {CAPTION_BUTTONS.map((b) => (
          <button key={b.label} aria-label={b.label} className="flex h-full w-[58px] items-center justify-center">
            <svg viewBox="0 0 14 14" className="size-3.5">
              <path d={b.d} fill="none" stroke="#000" />
            </svg>
          </button>
        ))}
      </div>

      <nav className="flex h-[25px] shrink-0 items-center gap-0.5 bg-white pb-0.5 pl-px">
        {MENUS.map((menu) => (
          <button key={menu} className="px-[7px] leading-5 not-last:pr-2">
            {menu}
          </button>
        ))}
      </nav>

      <Toolbar />

      <div className="flex min-h-0 flex-1">
        <WidgetBox />
        <MdiArea />
        <aside className="flex w-[512px] shrink-0 flex-col pt-px">
          <ObjectInspector />
          <PropertyEditor />
          <ResourceBrowser />
        </aside>
      </div>

      <footer className="flex h-[25px] shrink-0 flex-col justify-end">
        <div className="flex h-0.5">
          <div className="w-[60px] bg-[#444]" />
          <div className="w-[430px] border-t border-[#b4b4b4] bg-white" />
          <div className="flex-1 bg-[#444]" />
        </div>
      </footer>

      <NetMeter />
      <span className="absolute right-2.5 bottom-2 font-['Open_Sans',sans-serif] text-[15px] leading-5 text-[#dedede] [text-shadow:1px_1px_0_#fff]">
        https://blog.csdn.net/Forest_2Cat
      </span>
    </div>
  );
}
